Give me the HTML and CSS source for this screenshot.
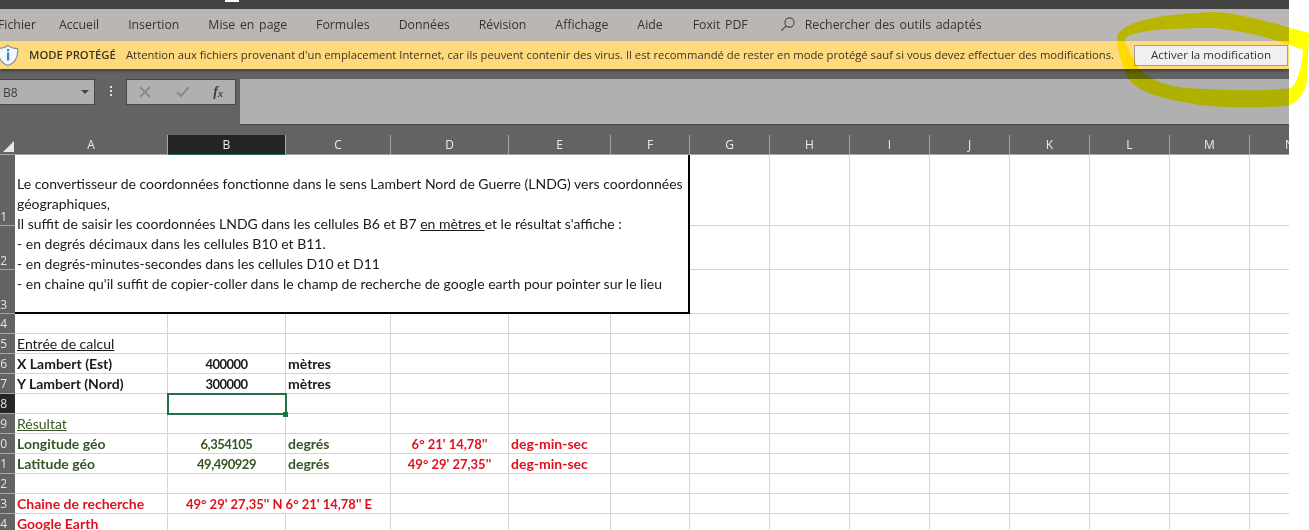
FILE: index.html
```html
<!DOCTYPE html>
<html lang="fr">
<head>
<meta charset="utf-8">
<title>Convertisseur LNDG</title>
<link rel="stylesheet" href="styles.css">
</head>
<body>
<div class="app">
  <div class="titlebar"><span class="title-mark"></span></div>
  <nav class="tabs">
    <span class="tab tab-first">Fichier</span>
    <span class="tab">Accueil</span>
    <span class="tab">Insertion</span>
    <span class="tab">Mise en page</span>
    <span class="tab">Formules</span>
    <span class="tab">Données</span>
    <span class="tab">Révision</span>
    <span class="tab">Affichage</span>
    <span class="tab tab-aide">Aide</span>
    <span class="tab">Foxit PDF</span>
    <svg class="search-icon" width="16" height="16" viewBox="0 0 16 16"><circle cx="9.500" cy="6.500" r="4.600" fill="none" stroke="#4a4a4a" stroke-width="1.100"/><path d="M6.200 9.800 1.500 14.500" stroke="#4a4a4a" stroke-width="1.200"/></svg>
    <span class="tab">Rechercher des outils adaptés</span>
  </nav>
  <div class="banner">
    <svg class="shield" width="20" height="23" viewBox="0 0 20 23"><path d="M8 1.500c2.500 2 6 3 9.500 3 .8 8-1 14-9.500 17C-.5 18.500-2.300 12.500-1.500 4.500 2 4.500 5.500 3.500 8 1.500Z" fill="#f3f6fa" stroke="#7f8fa0" stroke-width="1.200"/><rect x="7" y="8.500" width="2.200" height="8" fill="#2f86c8"/><rect x="7" y="5" width="2.200" height="2.200" fill="#2f86c8"/></svg>
    <strong class="banner-title">MODE PROTÉGÉ</strong>
    <span class="banner-text">Attention aux fichiers provenant d'un emplacement Internet, car ils peuvent contenir des virus. Il est recommandé de rester en mode protégé sauf si vous devez effectuer des modifications.</span>
    <button class="banner-btn">Activer la modification</button>
  </div>
  <div class="formula-row">
    <div class="namebox"><span>B8</span><i class="caret"></i></div>
    <div class="dots"><i></i><i></i><i></i></div>
    <div class="fbuttons">
      <svg width="14" height="14" viewBox="0 0 14 14"><path d="M2 2l10 10M12 2 2 12" stroke="#8a8a8a" stroke-width="2"/></svg>
      <svg width="16" height="14" viewBox="0 0 16 14"><path d="M2 7l4 4 8-9" fill="none" stroke="#8a8a8a" stroke-width="2"/></svg>
      <span class="fx">f<sub>x</sub></span>
    </div>
    <div class="fbar"></div>
  </div>
  <div class="sheet">
    <div class="corner"><svg width="11" height="11" viewBox="0 0 11 11"><path d="M11 0v11H0Z" fill="#e8e8e8"/></svg></div>
    <div class="ch">A</div><div class="ch ch-sel">B</div><div class="ch">C</div><div class="ch">D</div><div class="ch">E</div><div class="ch">F</div><div class="ch">G</div><div class="ch">H</div><div class="ch">I</div><div class="ch">J</div><div class="ch">K</div><div class="ch">L</div><div class="ch">M</div><div class="ch">N</div>

    <div class="rh rh-low">1</div>
    <div class="merged">Le convertisseur de coordonnées fonctionne dans le sens Lambert Nord de Guerre (LNDG) vers coordonnées<br>géographiques,<br>Il suffit de saisir les coordonnées LNDG dans les cellules B6 et B7 <u>en mètres </u>et le résultat s'affiche :<br>- en degrés décimaux dans les cellules B10 et B11.<br>- en degrés-minutes-secondes dans les cellules D10 et D11<br>- en chaine qu'il suffit de copier-coller dans le champ de recherche de google earth pour pointer sur le lieu</div>
    <div class="c"></div><div class="c"></div><div class="c"></div><div class="c"></div><div class="c"></div><div class="c"></div><div class="c"></div><div class="c"></div>
    <div class="rh rh-low">2</div>
    <div class="c"></div><div class="c"></div><div class="c"></div><div class="c"></div><div class="c"></div><div class="c"></div><div class="c"></div><div class="c"></div>
    <div class="rh rh-low">3</div>
    <div class="c"></div><div class="c"></div><div class="c"></div><div class="c"></div><div class="c"></div><div class="c"></div><div class="c"></div><div class="c"></div>

    <div class="rh">4</div>
    <div class="c"></div><div class="c"></div><div class="c"></div><div class="c"></div><div class="c"></div><div class="c"></div><div class="c"></div><div class="c"></div><div class="c"></div><div class="c"></div><div class="c"></div><div class="c"></div><div class="c"></div><div class="c"></div>

    <div class="rh">5</div>
    <div class="c"><u>Entrée de calcul</u></div>
    <div class="c"></div><div class="c"></div><div class="c"></div><div class="c"></div><div class="c"></div><div class="c"></div><div class="c"></div><div class="c"></div><div class="c"></div><div class="c"></div><div class="c"></div><div class="c"></div><div class="c"></div>

    <div class="rh">6</div>
    <div class="c b">X Lambert (Est)</div><div class="c b mid num">400000</div><div class="c b">mètres</div>
    <div class="c"></div><div class="c"></div><div class="c"></div><div class="c"></div><div class="c"></div><div class="c"></div><div class="c"></div><div class="c"></div><div class="c"></div><div class="c"></div><div class="c"></div>

    <div class="rh">7</div>
    <div class="c b">Y Lambert (Nord)</div><div class="c b mid num">300000</div><div class="c b">mètres</div>
    <div class="c"></div><div class="c"></div><div class="c"></div><div class="c"></div><div class="c"></div><div class="c"></div><div class="c"></div><div class="c"></div><div class="c"></div><div class="c"></div><div class="c"></div>

    <div class="rh rh-sel">8</div>
    <div class="c"></div><div class="c cell-active"></div><div class="c"></div>
    <div class="c"></div><div class="c"></div><div class="c"></div><div class="c"></div><div class="c"></div><div class="c"></div><div class="c"></div><div class="c"></div><div class="c"></div><div class="c"></div><div class="c"></div>

    <div class="rh">9</div>
    <div class="c green"><u>Résultat</u></div>
    <div class="c"></div><div class="c"></div><div class="c"></div><div class="c"></div><div class="c"></div><div class="c"></div><div class="c"></div><div class="c"></div><div class="c"></div><div class="c"></div><div class="c"></div><div class="c"></div><div class="c"></div>

    <div class="rh">10</div>
    <div class="c b green">Longitude géo</div><div class="c b green mid num">6,354105</div><div class="c b green">degrés</div><div class="c b red mid">6° 21' 14,78''</div><div class="c b red">deg-min-sec</div>
    <div class="c"></div><div class="c"></div><div class="c"></div><div class="c"></div><div class="c"></div><div class="c"></div><div class="c"></div><div class="c"></div><div class="c"></div>

    <div class="rh">11</div>
    <div class="c b green">Latitude géo</div><div class="c b green mid num">49,490929</div><div class="c b green">degrés</div><div class="c b red mid">49° 29' 27,35''</div><div class="c b red">deg-min-sec</div>
    <div class="c"></div><div class="c"></div><div class="c"></div><div class="c"></div><div class="c"></div><div class="c"></div><div class="c"></div><div class="c"></div><div class="c"></div>

    <div class="rh">12</div>
    <div class="c"></div><div class="c"></div><div class="c"></div><div class="c"></div><div class="c"></div><div class="c"></div><div class="c"></div><div class="c"></div><div class="c"></div><div class="c"></div><div class="c"></div><div class="c"></div><div class="c"></div><div class="c"></div>

    <div class="rh">13</div>
    <div class="c b red">Chaine de recherche</div><div class="c b red mid span2">49° 29' 27,35'' N 6° 21' 14,78'' E</div>
    <div class="c"></div><div class="c"></div><div class="c"></div><div class="c"></div><div class="c"></div><div class="c"></div><div class="c"></div><div class="c"></div><div class="c"></div><div class="c"></div><div class="c"></div>

    <div class="rh">14</div>
    <div class="c b red">Google Earth</div>
    <div class="c"></div><div class="c"></div><div class="c"></div><div class="c"></div><div class="c"></div><div class="c"></div><div class="c"></div><div class="c"></div><div class="c"></div><div class="c"></div><div class="c"></div><div class="c"></div><div class="c"></div>
  </div>
</div>
<svg class="marker" width="1309" height="530" viewBox="0 0 1309 530"><path fill-rule="evenodd" fill="#ffff00" d="M1117 36C1125 22 1150 15 1215 12 1245 14 1275 24 1309 33L1307 80C1305 95 1295 105 1285 106 1260 108 1220 108 1200 105 1170 100 1140 95 1128 78 1122 65 1117 50 1117 36ZM1125 38C1135 30 1170 28 1215 28 1250 32 1280 40 1303 50 1302 65 1298 80 1292 88 1260 92 1220 90 1185 88 1160 85 1140 75 1135 62 1130 52 1124 45 1125 38Z"/></svg>
</body>
</html>
```

FILE: styles.css
```css
*, *::before, *::after { box-sizing: border-box; }
html, body { margin: 0; height: 530px; overflow: hidden; background: #fff; }
body { position: relative; font-family: "Open Sans", "Noto Sans", sans-serif; }
.app { width: 1289px; height: 530px; overflow: hidden; display: flex; flex-direction: column; background: #636363; }

.titlebar { height: 9px; background: #434343; flex: none; }
.title-mark { display: block; width: 14px; height: 2px; margin-left: 225px; background: #fff; }

.tabs { height: 32px; flex: none; background: #b9b6b3; display: flex; align-items: center; gap: 29px; padding-bottom: 2px; font-size: 12.300px; word-spacing: 1.500px; color: #353535; white-space: nowrap; }
.tab-first { margin-left: -2px; margin-right: -6px; }
.tab-aide { margin-right: 1px; }
.search-icon { margin-left: 3px; margin-right: -20px; }

.banner { height: 28px; flex: none; background: #ffd97e; display: flex; align-items: center; font-size: 11.270px; color: #3d3420; white-space: nowrap; box-shadow: 0 2px 3px rgba(0,0,0,.35); position: relative; }
.shield { flex: none; margin-right: 9px; }
.banner-title { font-weight: 600; width: 97px; flex: none; margin-top: -2px; }
.banner-text { flex: 1; margin-top: -2px; }
.banner-btn { flex: none; width: 154px; height: 21px; margin-right: 1px; background: #f0f0f0; border: 1px solid #a89d8a; font: inherit; font-size: 11.600px; color: #333; padding: 0 0 2px; }

.formula-row { height: 66px; flex: none; display: flex; align-items: flex-start; padding-top: 10px; }
.namebox { width: 96px; height: 26px; margin-left: -1px; background: #b0b0b0; border: 1px solid #474747; display: flex; align-items: center; justify-content: space-between; padding: 0 5px 0 3px; font-size: 12px; color: #404040; }
.caret { width: 0; height: 0; border: 4px solid transparent; border-top: 4px solid #444; margin-top: 4px; }
.dots { width: 31px; display: flex; flex-direction: column; align-items: center; gap: 2px; padding-top: 7px; }
.dots i { width: 2px; height: 2px; background: #e0e0e0; }
.fbuttons { width: 110px; height: 26px; background: #b0b0b0; border: 1px solid #474747; display: flex; align-items: center; justify-content: space-between; padding: 0 12px 0 11px; }
.fx { font-family: "Liberation Serif", serif; font-style: italic; font-weight: 700; font-size: 14px; color: #3c3c3c; line-height: 1; }
.fx sub { font-size: 10px; vertical-align: -1px; }
.fbar { flex: 1; height: 46px; margin-left: 4px; background: #b0b0b0; border-bottom: 1px solid #474747; }

.sheet { flex: none; display: grid; grid-template-columns: 15px 153px 118px 105px 118px 102px 79px 80px 80px 80px 80px 80px 80px 80px 80px; grid-template-rows: 20px 71px 44px 44px repeat(11, 20px); background: #fff; font-family: Lato, "Open Sans", sans-serif; font-size: 14px; color: #1a1a1a; white-space: nowrap; }

.corner { background: #636363; border-bottom: 1px solid #a5a5a5; display: flex; align-items: flex-end; justify-content: flex-end; padding: 0 1px 2px 0; }
.ch { background: #636363; color: #ececec; font-family: "Open Sans", sans-serif; font-size: 12px; display: flex; align-items: center; justify-content: center; border-right: 1px solid #a5a5a5; border-bottom: 1px solid #a5a5a5; }
.ch-sel { background: #252525; border-bottom: 1px solid #217346; }
.rh { background: #636363; color: #e4e4e4; font-family: "Open Sans", sans-serif; font-size: 12px; display: flex; align-items: center; justify-content: flex-end; padding-right: 8px; border-bottom: 1px solid #a5a5a5; overflow: hidden; }
.rh-low { align-items: flex-end; }
.rh-sel { background: #252525; }

.c { border-right: 1px solid #d4d4d4; border-bottom: 1px solid #d4d4d4; padding-left: 2px; line-height: 20px; min-width: 0; }
.b { font-weight: 700; }
.mid { text-align: center; padding-left: 0; font-size: 13px; }
.num { letter-spacing: -.5px; }
.green { color: #375623; }
.red { color: #e0101c; }
.span2 { grid-column: span 2; }
.cell-active { position: relative; }
.cell-active::after { content: ""; position: absolute; left: -1px; top: -1px; width: 120px; height: 22px; border: 2px solid #217346; }
.cell-active::before { content: ""; position: absolute; z-index: 1; left: 115px; top: 18px; width: 5px; height: 5px; background: #217346; }
.merged { grid-column: span 6; grid-row: span 3; border-right: 2px solid #000; border-bottom: 2px solid #000; padding: 19px 0 0 2px; line-height: 20px; }

.marker { position: absolute; left: 0; top: 0; mix-blend-mode: multiply; pointer-events: none; }
```
